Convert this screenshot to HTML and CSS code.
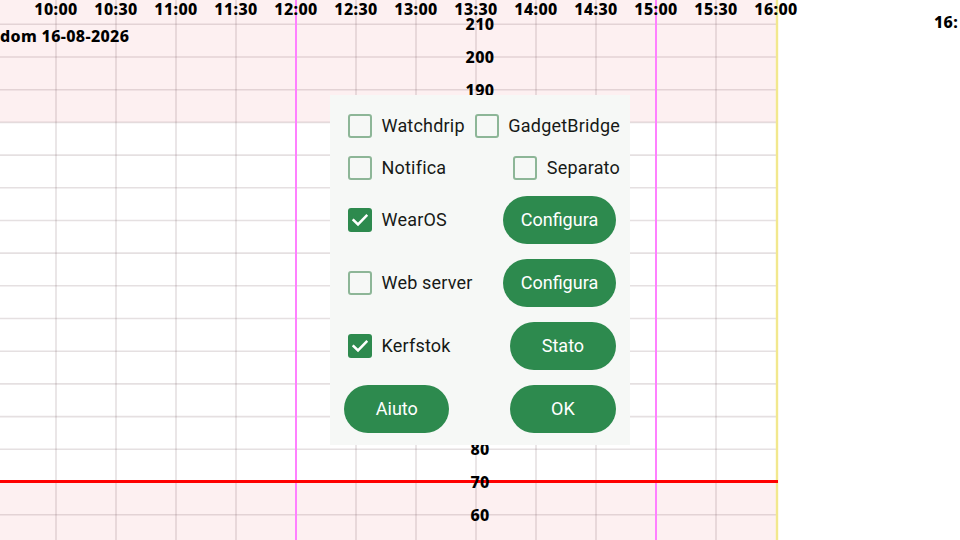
FILE: index.html
```html
<!DOCTYPE html>
<html lang="it">
<head>
<meta charset="utf-8">
<title>Grafico glicemia</title>
<link rel="stylesheet" href="styles.css">
</head>
<body>
<div class="stage">
  <svg class="chart" width="960" height="540" viewBox="0 0 960 540">
    <!-- out-of-range bands -->
    <rect class="band" x="0" y="0" width="777" height="122.4"/>
    <rect class="band" x="0" y="482" width="777" height="58"/>
    <!-- horizontal grid, 10 mg/dL per step -->
    <g class="grid">
      <line x1="0" x2="777" y1="24.3" y2="24.3"/>
      <line x1="0" x2="777" y1="57" y2="57"/>
      <line x1="0" x2="777" y1="89.7" y2="89.7"/>
      <line x1="0" x2="777" y1="122.4" y2="122.4"/>
      <line x1="0" x2="777" y1="155.1" y2="155.1"/>
      <line x1="0" x2="777" y1="187.8" y2="187.8"/>
      <line x1="0" x2="777" y1="220.5" y2="220.5"/>
      <line x1="0" x2="777" y1="253.1" y2="253.1"/>
      <line x1="0" x2="777" y1="285.8" y2="285.8"/>
      <line x1="0" x2="777" y1="318.5" y2="318.5"/>
      <line x1="0" x2="777" y1="351.2" y2="351.2"/>
      <line x1="0" x2="777" y1="383.9" y2="383.9"/>
      <line x1="0" x2="777" y1="416.6" y2="416.6"/>
      <line x1="0" x2="777" y1="449.3" y2="449.3"/>
      <line x1="0" x2="777" y1="514.7" y2="514.7"/>
    </g>
    <!-- vertical grid, 30 minutes per step -->
    <g class="grid">
      <line x1="56" x2="56" y1="0" y2="540"/>
      <line x1="116" x2="116" y1="0" y2="540"/>
      <line x1="176" x2="176" y1="0" y2="540"/>
      <line x1="236" x2="236" y1="0" y2="540"/>
      <line x1="356" x2="356" y1="0" y2="540"/>
      <line x1="416" x2="416" y1="0" y2="540"/>
      <line x1="476" x2="476" y1="0" y2="540"/>
      <line x1="536" x2="536" y1="0" y2="540"/>
      <line x1="596" x2="596" y1="0" y2="540"/>
      <line x1="716" x2="716" y1="0" y2="540"/>
    </g>
    <line class="hour3" x1="296" x2="296" y1="0" y2="540"/>
    <line class="hour3" x1="656" x2="656" y1="0" y2="540"/>
    <line class="now" x1="777" x2="777" y1="0" y2="540"/>
    <line class="low" x1="0" x2="778" y1="481.5" y2="481.5"/>

    <g class="axis">
      <text x="56" y="14.5" text-anchor="middle">10:00</text>
      <text x="116" y="14.5" text-anchor="middle">10:30</text>
      <text x="176" y="14.5" text-anchor="middle">11:00</text>
      <text x="236" y="14.5" text-anchor="middle">11:30</text>
      <text x="296" y="14.5" text-anchor="middle">12:00</text>
      <text x="356" y="14.5" text-anchor="middle">12:30</text>
      <text x="416" y="14.5" text-anchor="middle">13:00</text>
      <text x="476" y="14.5" text-anchor="middle">13:30</text>
      <text x="536" y="14.5" text-anchor="middle">14:00</text>
      <text x="596" y="14.5" text-anchor="middle">14:30</text>
      <text x="656" y="14.5" text-anchor="middle">15:00</text>
      <text x="716" y="14.5" text-anchor="middle">15:30</text>
      <text x="776" y="14.5" text-anchor="middle">16:00</text>
      <text x="934" y="28">16:</text>
      <text x="0" y="41.8">dom 16-08-2026</text>

      <text x="480" y="30.3" text-anchor="middle">210</text>
      <text x="480" y="63" text-anchor="middle">200</text>
      <text x="480" y="95.7" text-anchor="middle">190</text>
      <text x="480" y="128.4" text-anchor="middle">180</text>
      <text x="480" y="422.6" text-anchor="middle">90</text>
      <text x="480" y="455.3" text-anchor="middle">80</text>
      <text x="480" y="488" text-anchor="middle">70</text>
      <text x="480" y="520.7" text-anchor="middle">60</text>
    </g>
  </svg>

  <div class="dialog">
    <label class="check">
      <span class="box"></span><span class="label">Watchdrip</span>
    </label>
    <label class="check right">
      <span class="box"></span><span class="label">GadgetBridge</span>
    </label>

    <label class="check">
      <span class="box"></span><span class="label">Notifica</span>
    </label>
    <label class="check right">
      <span class="box"></span><span class="label">Separato</span>
    </label>

    <label class="check">
      <span class="box on"><svg viewBox="0 0 24 24" width="24" height="24"><path d="M5.6 12.2 L10 16.4 L18.4 7.8" /></svg></span><span class="label">WearOS</span>
    </label>
    <button class="btn wide right">Configura</button>

    <label class="check">
      <span class="box"></span><span class="label">Web server</span>
    </label>
    <button class="btn wide right">Configura</button>

    <label class="check">
      <span class="box on"><svg viewBox="0 0 24 24" width="24" height="24"><path d="M5.6 12.2 L10 16.4 L18.4 7.8" /></svg></span><span class="label">Kerfstok</span>
    </label>
    <button class="btn right">Stato</button>

    <button class="btn left">Aiuto</button>
    <button class="btn right">OK</button>
  </div>
</div>
</body>
</html>
```

FILE: styles.css
```css
html, body {
  margin: 0;
  padding: 0;
  background: #ffffff;
}

.stage {
  position: relative;
  width: 960px;
  height: 540px;
  overflow: hidden;
}

.chart {
  display: block;
}

.band {
  fill: #fdf0f1;
}

.grid line {
  stroke: rgba(80, 50, 55, 0.15);
  stroke-width: 1.6;
}

.hour3 {
  stroke: #ff80ff;
  stroke-width: 2;
}

.now {
  stroke: #f2e88e;
  stroke-width: 2.4;
}

.low {
  stroke: #ff0000;
  stroke-width: 3;
}

.axis text {
  font-family: "Noto Sans", "DejaVu Sans", sans-serif;
  font-weight: 800;
  font-size: 16px;
  letter-spacing: 0.35px;
  fill: #000000;
}

/* settings dialog over the chart */
.dialog {
  position: absolute;
  left: 330px;
  top: 95px;
  width: 300px;
  height: 350px;
  box-sizing: border-box;
  padding: 9.7px 10px 0 14px;
  background: #f6f8f6;
  display: grid;
  grid-template-columns: 1fr auto;
  grid-template-rows: 42px 42px 63px 63px 63px 63px;
  align-items: center;
  font-family: Roboto, "Noto Sans", sans-serif;
  font-size: 18px;
}

.check {
  display: flex;
  align-items: center;
  color: #171a17;
  white-space: nowrap;
}

.check .box {
  box-sizing: border-box;
  width: 24px;
  height: 24px;
  margin-left: 4px;
  margin-right: 9.5px;
  border: 2.4px solid #8db697;
  border-radius: 3px;
  display: flex;
  align-items: center;
  justify-content: center;
  overflow: hidden;
}

.check .box.on {
  background: #2d8a4e;
  border: none;
}

.check .box svg {
  display: block;
  flex: none;
}

.check .box path {
  fill: none;
  stroke: #ffffff;
  stroke-width: 2.5;
  stroke-linecap: square;
}

.check .label {
  line-height: 24px;
  letter-spacing: 0.2px;
}

.right {
  justify-self: end;
}

.check.right .box {
  margin-left: 0;
}

.btn {
  height: 47.5px;
  width: 105.5px;
  border: none;
  border-radius: 24px;
  background: #2d8a4e;
  color: #ffffff;
  font-family: Roboto, "Noto Sans", sans-serif;
  font-size: 18px;
  line-height: 47.5px;
  padding: 0 0 1px 0;
  cursor: pointer;
}

.btn.wide {
  width: 112.5px;
}

.btn.right {
  margin-right: 4.3px;
}

.btn.left {
  justify-self: start;
  width: 105px;
  margin-left: 0.3px;
}
```
